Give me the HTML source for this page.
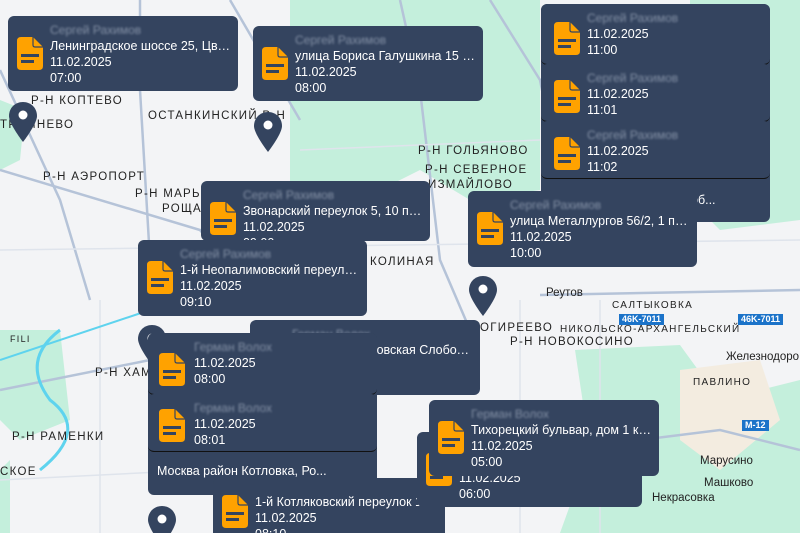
<!DOCTYPE html><html><head><meta charset="utf-8"><style>
html,body{margin:0;width:800px;height:533px;overflow:hidden}
body{position:relative;background:#f3f4f6;font-family:"Liberation Sans","DejaVu Sans",sans-serif}
.lbl{position:absolute;font-size:11.5px;letter-spacing:1.3px;color:#222;white-space:nowrap}
.c{position:absolute;background:#34445f;border-radius:6px;color:#fff;font-size:12.5px;line-height:16px;box-sizing:border-box;padding:6px 8px 0 42px;overflow:hidden;white-space:nowrap}
.c div{overflow:hidden;text-overflow:ellipsis}
.c .n{color:#8491a6;filter:blur(1px);font-size:12px}
.ic{position:absolute;left:9px;top:21px;width:26px;height:33px}
.sub{position:absolute;left:0;right:0;background:#34445f;border-radius:6px;border-bottom:1.5px solid #111;padding:6px 8px 0 46px;box-sizing:border-box}
.pin{position:absolute;width:28px;height:40px}
.rd{position:absolute;color:#fff;font-size:9px;font-weight:bold;padding:0 3px;background:#1b73c9;line-height:11px}
</style></head><body>
<svg width="800" height="533" style="position:absolute;left:0;top:0">
<path d="M290 0 H540 V190 L470 200 L420 170 L380 190 L290 200 Z" fill="#c4efdc"/>
<path d="M690 0 H800 V220 L720 230 L690 200 Z" fill="#c4efdc"/>
<path d="M575 350 L680 345 L720 400 L800 380 V533 H560 L590 450 Z" fill="#c4efdc"/>
<path d="M680 370 L760 360 L780 420 L720 470 L680 440 Z" fill="#f3ece0"/>
<path d="M0 100 L25 110 L20 160 L0 170Z" fill="#c4efdc"/>
<path d="M0 330 L60 330 L70 420 L20 440 L0 420Z" fill="#c4efdc"/>
<path d="M0 470 L10 460 L10 533 H0Z" fill="#c4efdc"/>
<g stroke="#b5c3d8" stroke-width="2.5" fill="none">
<path d="M0 170 L200 230 L260 300"/><path d="M140 0 L140 90 L150 260"/><path d="M400 0 L420 90 L440 260 L470 330"/>
<path d="M490 0 L540 80 L560 180"/><path d="M540 295 L800 290"/><path d="M520 440 L640 440 L720 430 L800 450"/>
<path d="M0 390 L150 360"/><path d="M230 0 L300 120"/><path d="M0 70 L60 200 L90 300"/>
</g>
<g stroke="#dfe4ec" stroke-width="1.5" fill="none">
<path d="M0 250 L800 240"/><path d="M300 150 L540 140"/><path d="M100 300 L100 533"/><path d="M520 300 L520 533"/><path d="M0 480 L200 470"/><path d="M600 300 L600 533"/>
</g>
<path d="M60 330 Q20 360 50 400 Q90 430 40 470" stroke="#5ed3ee" stroke-width="3" fill="none"/>
<path d="M0 360 L150 310" stroke="#5ed3ee" stroke-width="2" fill="none"/>
</svg>
<div class="lbl" style="left:31px;top:95px">Р-Н КОПТЕВО</div>
<div class="lbl" style="left:0;top:119px">ТРОЙНЕВО</div>
<div class="lbl" style="left:148px;top:110px">ОСТАНКИНСКИЙ Р-Н</div>
<div class="lbl" style="left:43px;top:171px">Р-Н АЭРОПОРТ</div>
<div class="lbl" style="left:135px;top:188px">Р-Н МАРЬ</div>
<div class="lbl" style="left:162px;top:203px">РОЩА</div>
<div class="lbl" style="left:418px;top:145px">Р-Н ГОЛЬЯНОВО</div>
<div class="lbl" style="left:425px;top:164px">Р-Н СЕВЕРНОЕ</div>
<div class="lbl" style="left:428px;top:179px">ИЗМАЙЛОВО</div>
<div class="lbl" style="left:370px;top:256px">КОЛИНАЯ</div>
<div class="lbl" style="left:546px;top:287px;letter-spacing:0">Реутов</div>
<div class="lbl" style="left:612px;top:300px;font-size:10px">САЛТЫКОВКА</div>
<div class="lbl" style="left:560px;top:324px;font-size:10px">НИКОЛЬСКО-АРХАНГЕЛЬСКИЙ</div>
<div class="lbl" style="left:510px;top:336px">Р-Н НОВОКОСИНО</div>
<div class="lbl" style="left:480px;top:322px">ОГИРЕЕВО</div>
<div class="lbl" style="left:726px;top:351px;letter-spacing:0">Железнодоро</div>
<div class="lbl" style="left:693px;top:377px;font-size:10px">ПАВЛИНО</div>
<div class="lbl" style="left:700px;top:455px;letter-spacing:0">Марусино</div>
<div class="lbl" style="left:704px;top:477px;letter-spacing:0">Машково</div>
<div class="lbl" style="left:652px;top:492px;letter-spacing:0">Некрасовка</div>
<div class="lbl" style="left:95px;top:367px">Р-Н ХАМ</div>
<div class="lbl" style="left:12px;top:431px">Р-Н РАМЕНКИ</div>
<div class="lbl" style="left:0;top:466px">СКОЕ</div>
<div class="lbl" style="left:10px;top:334px;font-size:9px">FILI</div>
<div class="lbl" style="left:160px;top:296px;font-size:22px;letter-spacing:0;color:#333">Москва</div>
<div class="rd" style="left:619px;top:314px">46K-7011</div>
<div class="rd" style="left:738px;top:314px">46K-7011</div>
<div class="rd" style="left:742px;top:420px">M-12</div>

<svg width="0" height="0" style="position:absolute"><defs>
<symbol id="doc" viewBox="0 0 26 33"><path d="M4 0 H16 L26 10 V29 Q26 33 22 33 H4 Q0 33 0 29 V4 Q0 0 4 0Z" fill="#ffa200"/><path d="M16 0 V8 Q16 10 18 10 H26" fill="none" stroke="#34445f" stroke-width="1.2"/><rect x="4" y="17" width="18" height="3" fill="#34445f"/><rect x="4" y="23" width="13" height="3" fill="#34445f"/></symbol>
<symbol id="pin" viewBox="0 0 28 40"><path d="M14 0 C6 0 0 6 0 14 C0 22 14 40 14 40 C14 40 28 22 28 14 C28 6 22 0 14 0Z" fill="#34445f"/><circle cx="14" cy="13" r="4.5" fill="#fff"/></symbol>
</defs></svg>
<svg class="pin" style="left:9px;top:102px"><use href="#pin"/></svg>
<svg class="pin" style="left:254px;top:112px"><use href="#pin"/></svg>
<svg class="pin" style="left:469px;top:276px"><use href="#pin"/></svg>
<svg class="pin" style="left:138px;top:325px"><use href="#pin"/></svg>
<svg class="pin" style="left:148px;top:506px"><use href="#pin"/></svg>

<div class="c" style="left:8px;top:16px;width:230px;height:75px"><svg class="ic"><use href="#doc"/></svg><div class="n">Сергей Рахимов</div><div>Ленинградское шоссе 25, Цветной</div>11.02.2025<br>07:00</div>
<div class="c" style="left:253px;top:26px;width:230px;height:75px"><svg class="ic"><use href="#doc"/></svg><div class="n">Сергей Рахимов</div><div>улица Бориса Галушкина 15 корп</div>11.02.2025<br>08:00</div>
<div class="c" style="left:541px;top:4px;width:229px;height:218px"><div style="position:absolute;left:150px;top:188px">об...</div>
<div class="sub" style="top:0;height:61px"><svg class="ic" style="left:13px;top:18px"><use href="#doc"/></svg><div class="n">Сергей Рахимов</div>11.02.2025<br>11:00</div>
<div class="sub" style="top:60px;height:58px"><svg class="ic" style="left:13px;top:16px"><use href="#doc"/></svg><div class="n">Сергей Рахимов</div>11.02.2025<br>11:01</div>
<div class="sub" style="top:117px;height:58px"><svg class="ic" style="left:13px;top:16px"><use href="#doc"/></svg><div class="n">Сергей Рахимов</div>11.02.2025<br>11:02</div></div>
<div class="c" style="left:201px;top:181px;width:229px;height:60px"><svg class="ic"><use href="#doc"/></svg><div class="n">Сергей Рахимов</div><div>Звонарский переулок 5, 10 подъезд</div>11.02.2025<br>09:00</div>
<div class="c" style="left:138px;top:240px;width:229px;height:76px"><svg class="ic"><use href="#doc"/></svg><div class="n">Сергей Рахимов</div><div>1-й Неопалимовский переулок 3</div>11.02.2025<br>09:10</div>
<div class="c" style="left:468px;top:191px;width:229px;height:76px"><svg class="ic"><use href="#doc"/></svg><div class="n">Сергей Рахимов</div><div>улица Металлургов 56/2, 1 подъезд</div>11.02.2025<br>10:00</div>
<div class="c" style="left:250px;top:320px;width:230px;height:75px"><svg class="ic"><use href="#doc"/></svg><div class="n">Герман Волох</div><div>Москва Семёновская Слобода 2 корп</div>11.02.2025<br>07:00</div>
<div class="c" style="left:148px;top:333px;width:229px;height:162px"><div style="position:absolute;left:9px;top:130px;width:180px">Москва район Котловка, Ро...</div>
<div class="sub" style="top:0;height:62px"><svg class="ic" style="left:11px;top:20px"><use href="#doc"/></svg><div class="n">Герман Волох</div>11.02.2025<br>08:00</div>
<div class="sub" style="top:61px;height:58px"><svg class="ic" style="left:11px;top:15px"><use href="#doc"/></svg><div class="n">Герман Волох</div>11.02.2025<br>08:01</div></div>
<div class="c" style="left:213px;top:478px;width:232px;height:70px;padding-top:16px"><svg class="ic" style="top:17px"><use href="#doc"/></svg><div>1-й Котляковский переулок 12 строение</div>11.02.2025<br>08:10</div>
<div class="c" style="left:417px;top:432px;width:225px;height:75px"><svg class="ic"><use href="#doc"/></svg><div class="n">Герман Волох</div><div>Тихорецкий бульвар</div>11.02.2025<br>06:00</div>
<div class="c" style="left:429px;top:400px;width:230px;height:76px"><svg class="ic"><use href="#doc"/></svg><div class="n">Герман Волох</div><div>Тихорецкий бульвар, дом 1 корпус</div>11.02.2025<br>05:00</div>
</body></html>
